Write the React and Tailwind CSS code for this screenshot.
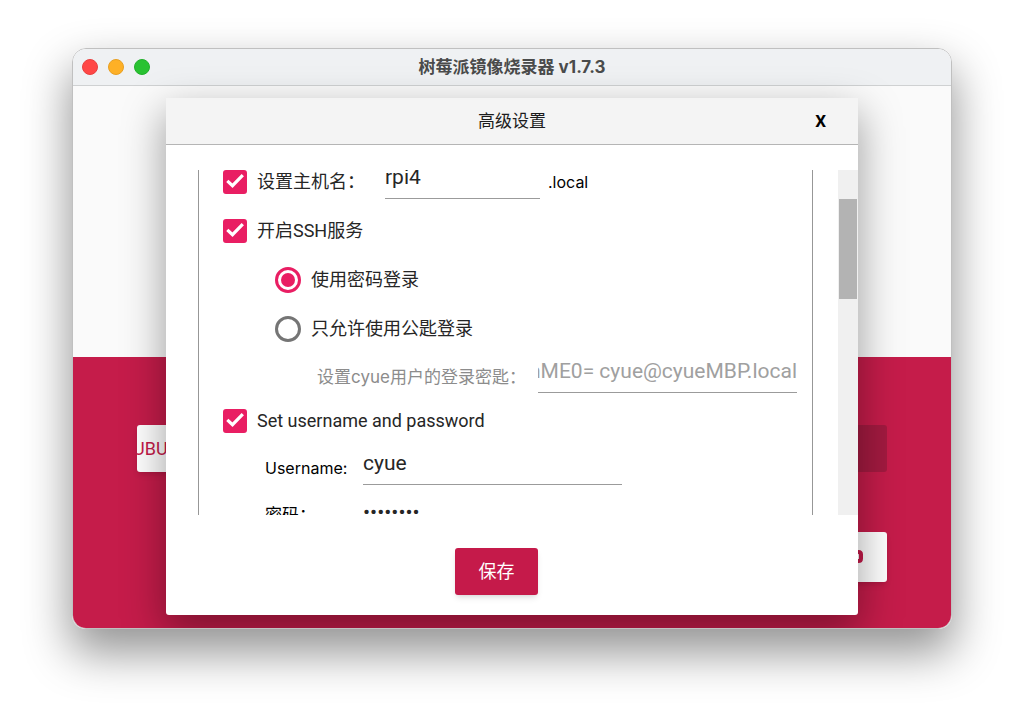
import React, { useState } from "react";

const ui = "font-[Inter,'Noto_Sans_CJK_SC',sans-serif]";
const material = "font-[Roboto,'Noto_Sans_CJK_SC',sans-serif]";
const field =
  "h-[35px] min-w-0 border-b border-[#9b9b9b] bg-transparent pb-2 text-[21px] leading-6 outline-none font-[Roboto,'Noto_Sans_CJK_SC',sans-serif]";

function CheckRow({ id, label }) {
  const [on, setOn] = useState(true);
  return (
    <label htmlFor={id} className={`flex items-center gap-2.5 text-lg text-[#262626] ${material}`}>
      <span className="relative flex size-6">
        <input
          id={id}
          type="checkbox"
          checked={on}
          onChange={() => setOn(!on)}
          className="peer size-6 appearance-none rounded-[3px] border-2 border-[#757575] checked:border-[#e91e63] checked:bg-[#e91e63]"
        />
        <svg viewBox="0 0 24 24" className="pointer-events-none absolute inset-0 hidden peer-checked:block" fill="none" stroke="#fff" strokeWidth="3.2">
          <path d="M4.300 10.800 9.500 15.700 19.800 5.200" />
        </svg>
      </span>
      {label}
    </label>
  );
}

function RadioRow({ id, label, checked, onChange }) {
  return (
    <label htmlFor={id} className={`flex items-center gap-2.5 text-lg text-[#262626] ${material}`}>
      <span className="relative flex size-[26px]">
        <input
          id={id}
          type="radio"
          name="ssh-auth"
          checked={checked}
          onChange={onChange}
          className="peer size-[26px] appearance-none rounded-full border-[3px] border-[#757575] checked:border-[#e91e63]"
        />
        <span className="pointer-events-none absolute inset-0 m-auto hidden size-3.5 rounded-full bg-[#e91e63] peer-checked:block" />
      </span>
      {label}
    </label>
  );
}

function TitleBar() {
  return (
    <header className="grid h-[37px] grid-cols-[1fr_auto_1fr] items-center border-b border-[#cfd1d2] bg-[#eff1f3] px-[9px]">
      <div className="flex gap-2.5">
        <button aria-label="关闭窗口" className="size-4 rounded-full border border-[#e8403f] bg-[#ff4746]" />
        <button aria-label="最小化" className="size-4 rounded-full border border-[#e79f22] bg-[#feb026]" />
        <button aria-label="缩放" className="size-4 rounded-full border border-[#22b02c] bg-[#28c231]" />
      </div>
      <h1 className={`text-[17px] leading-6 font-bold text-[#4a4b4b] ${ui}`}>树莓派镜像烧录器 v1.7.3</h1>
    </header>
  );
}

function MainScreen() {
  return (
    <main className="flex flex-1 flex-col bg-[#fafafa]">
      <div className="h-[271px]" />
      <div className="flex flex-1 flex-col gap-[60px] bg-[#c51c4a] px-16 pt-[68px]">
        <div className="flex justify-between">
          <button className={`flex h-[47px] w-40 items-center overflow-hidden rounded-[3px] bg-white text-lg text-[#c51a4a] shadow-md ${material}`}>
            <span className="-ml-1">UBU</span>
          </button>
          <button disabled aria-label="写入" className="h-[47px] w-40 rounded-[3px] bg-[#a31a40]" />
        </div>
        <div className="flex justify-end">
          <button aria-label="设置" className="flex h-[50px] w-[60px] items-center rounded-[3px] bg-white shadow-md">
            <svg viewBox="0 0 60 50" className="h-[50px] w-[60px]" fill="none" stroke="#c51a4a" strokeWidth="4">
              <path d="M24 20h7.500q2.500 0 2.500 2.500v4q0 2.500-2.500 2.500H24" />
            </svg>
          </button>
        </div>
      </div>
    </main>
  );
}

function SettingsDialog() {
  const [auth, setAuth] = useState("password");
  return (
    <section
      role="dialog"
      aria-labelledby="dialog-title"
      className="absolute inset-x-[93px] top-[49px] flex flex-col rounded-[3px] bg-white shadow-[0_16px_42px_2px_rgba(0,0,0,0.36)]"
    >
      <header className="grid h-[47px] grid-cols-[1fr_auto_1fr] items-center border-b border-[#b5b5b5] bg-[#f4f4f4]">
        <span />
        <h2 id="dialog-title" className={`text-[17px] leading-6 text-[#1c1c1c] ${ui}`}>高级设置</h2>
        <button aria-label="关闭" className={`mr-8 justify-self-end text-[17px] leading-6 font-bold text-black ${material}`}>X</button>
      </header>

      <div className="mt-[25px] flex h-[345px] overflow-hidden pl-8">
        <form className="-mt-[13px] flex min-w-0 flex-1 flex-col self-start border-x border-[#979797] pr-[15px] pl-6">
          <div className="flex h-[49px] items-center">
            <CheckRow id="set-host" label="设置主机名：" />
            <input aria-label="主机名" defaultValue="rpi4" className={`ml-5 w-[155px] text-[#262626] ${field}`} />
            <span className={`ml-2 text-base text-black ${ui}`}>.local</span>
          </div>
          <div className="flex h-[49px] items-center">
            <CheckRow id="ssh" label="开启SSH服务" />
          </div>
          <div className="flex h-[49px] items-center pl-[52px]">
            <RadioRow id="auth-password" label="使用密码登录" checked={auth === "password"} onChange={() => setAuth("password")} />
          </div>
          <div className="flex h-[49px] items-center pl-[52px]">
            <RadioRow id="auth-key" label="只允许使用公匙登录" checked={auth === "key"} onChange={() => setAuth("key")} />
          </div>
          <div className="flex h-11 items-end justify-between pb-1 pl-[94px]">
            <label htmlFor="key" className={`text-[17px] leading-8 text-[#8c8c8c] ${ui}`}>设置cyue用户的登录密匙：</label>
            <input id="key" dir="rtl" readOnly defaultValue="nME0= cyue@cyueMBP.local" className={`w-[259px] text-[#a0a0a0] ${field}`} />
          </div>
          <div className="flex h-[47px] items-center">
            <CheckRow id="set-user" label="Set username and password" />
          </div>
          <div className="flex h-[47px] items-center pl-[42px]">
            <label htmlFor="username" className={`w-[98px] text-base text-black ${ui}`}>Username:</label>
            <input id="username" defaultValue="cyue" className={`w-[259px] text-[#262626] ${field}`} />
          </div>
          <div className="flex h-[50px] items-center pl-[42px]">
            <label htmlFor="password" className={`w-[98px] text-[17px] text-black ${ui}`}>密码：</label>
            <input id="password" type="password" defaultValue="password" className={`w-[259px] text-[#262626] ${field}`} />
          </div>
        </form>
        <div className="ml-[25px] w-5 bg-[#f0f0f0] px-px pt-[29px]">
          <div className="h-[100px] bg-[#b3b3b3]" />
        </div>
      </div>

      <footer className="flex justify-center pt-[33px] pr-[31px] pb-5">
        <button className={`h-[47px] w-[83px] rounded-[3px] bg-[#c51a4a] text-lg text-white shadow-md ${material}`}>保存</button>
      </footer>
    </section>
  );
}

export default function App() {
  return (
    <div className="min-h-screen bg-white px-[72px] py-12">
      <div className="relative flex min-h-[581px] flex-col overflow-hidden rounded-[14px] border border-[#c0c0c0] shadow-[0_22px_46px_2px_rgba(0,0,0,0.42)]">
        <TitleBar />
        <MainScreen />
        <SettingsDialog />
      </div>
    </div>
  );
}
